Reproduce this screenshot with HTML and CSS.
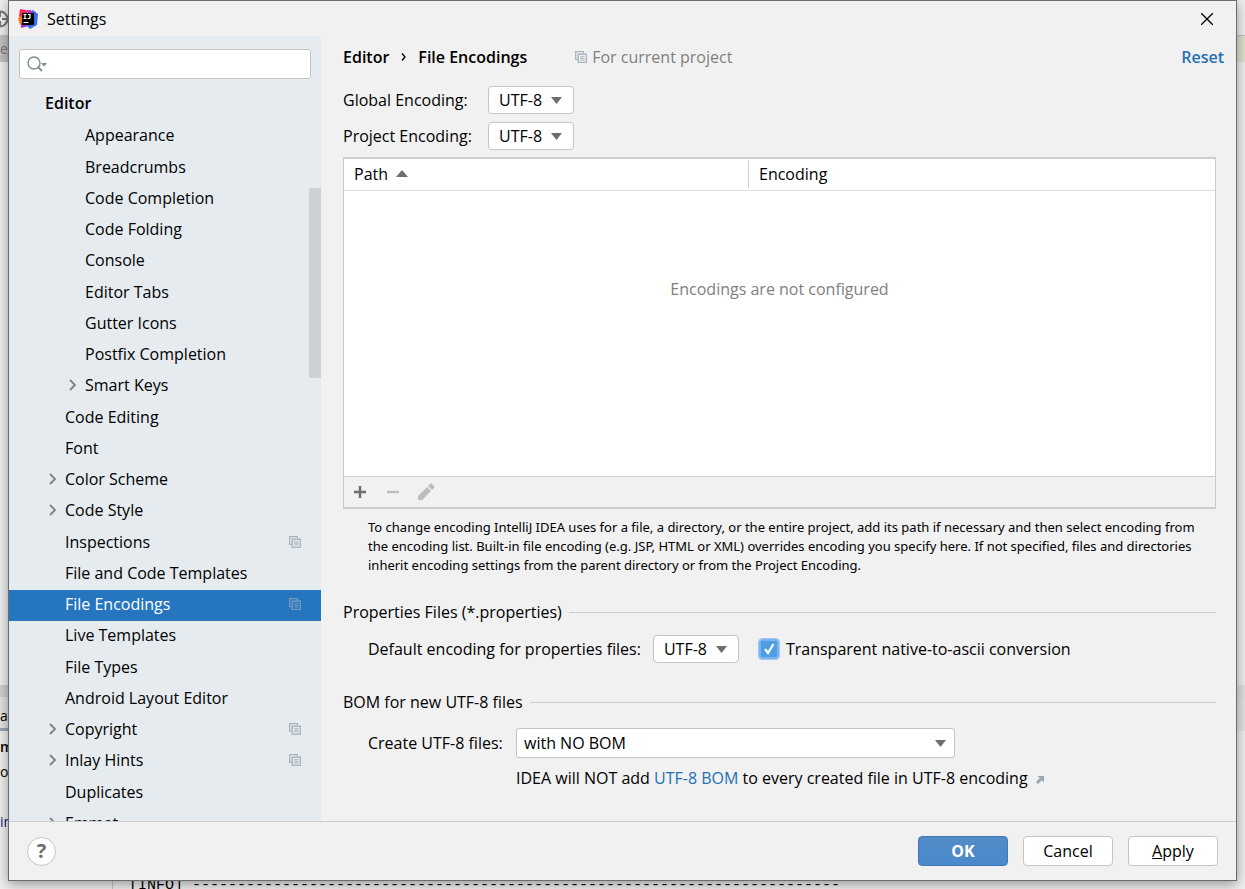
FILE: index.html
```html
<!DOCTYPE html>
<html lang="en">
<head>
  <meta charset="UTF-8">
  <title>Settings</title>
  <link rel="stylesheet" href="styles.css">
</head>
<body>
  <!-- shared icons -->
  <svg class="sprite" aria-hidden="true">
    <symbol id="copy" viewBox="0 0 12 12">
      <path d="M0 0h9v2.500H7.700V1.300H1.300v6.400h1.200V9H0z" fill="#a9b5bf"/>
      <path d="M2.500 2.500H12V12H2.500zM4 4v6.700h6.700V4z" fill="#a9b5bf" fill-rule="evenodd"/>
      <path d="M5.200 5.700h4.300M5.200 7.300h4.300M5.200 9h4.300" stroke="#a9b5bf" stroke-width="1"/>
    </symbol>
    <symbol id="arrow" viewBox="0 0 8 12">
      <path d="M1 1l5 5-5 5" fill="none" stroke="#808080" stroke-width="1.800"/>
    </symbol>
  </svg>

  <!-- IDE behind the dialog -->
  <div class="ide">
    <div class="ide-toolbar">
      <svg width="18" height="18" viewBox="0 0 18 18"><circle cx="9" cy="9" r="7.500" fill="none" stroke="#777" stroke-width="2"/><path d="M9 2v5M9 11v5M11 9h5M2 9h5" stroke="#777" stroke-width="2"/></svg>
    </div>
    <div class="ide-tabs">e_</div>
    <div class="ide-editor"></div>
    <div class="ide-bar"></div>
    <div class="ide-run"><span>av</span></div>
    <div class="ide-console">
      <div class="ide-tree"><b>m</b><span>or</span><span></span><span class="blue">in</span></div>
      <pre class="ide-log">[INFO] ------------------------------------------------------------------------</pre>
    </div>
  </div>

  <div class="dialog">
    <header class="titlebar">
      <svg width="20" height="20" viewBox="0 0 20 20">
        <path d="M2 0l6 1 3 3-4 9-5 1 1-4-2-3z" fill="#fe2857"/>
        <path d="M0 9l4-2 2 7-4 2z" fill="#f97a12"/>
        <path d="M3 14l6-2 2 5-8 2z" fill="#a334d8"/>
        <path d="M12 3l3-2 5 4-1 11-7 4-4-4z" fill="#3a6cf0"/>
        <path d="M9 1l4 0 1 3-4 2z" fill="#c032c8"/>
        <path d="M4 4h12v12H4z"/>
        <path d="M5.500 5.500h3M7 5.500v4M5.500 9.500h3M10 5.500h2v3q0 1-1 1h-1.500M5.500 13.500h5" fill="none" stroke="#fff" stroke-width="1.200"/>
      </svg>
      <span>Settings</span>
      <button class="close" aria-label="Close">
        <svg width="12" height="12" viewBox="0 0 12 12"><path d="M0 0l12 12M12 0L0 12" stroke="#000" stroke-width="1.300"/></svg>
      </button>
    </header>

    <div class="main">
      <aside class="sidebar">
        <div class="search">
          <svg width="22" height="16" viewBox="0 0 22 16"><circle cx="7" cy="7" r="6" fill="none" stroke="#7f8b91" stroke-width="1.400"/><path d="M11 11l4 4" stroke="#7f8b91" stroke-width="1.800"/><path d="M14 7h6l-3 3.500z" fill="#7f8b91"/></svg>
          <input type="text" aria-label="Search settings">
        </div>
        <ul class="tree">
          <li class="root">Editor</li>
          <li class="deep">Appearance</li>
          <li class="deep">Breadcrumbs</li>
          <li class="deep">Code Completion</li>
          <li class="deep">Code Folding</li>
          <li class="deep">Console</li>
          <li class="deep">Editor Tabs</li>
          <li class="deep">Gutter Icons</li>
          <li class="deep">Postfix Completion</li>
          <li class="deep"><svg class="arrow"><use href="#arrow"/></svg>Smart Keys</li>
          <li>Code Editing</li>
          <li>Font</li>
          <li><svg class="arrow"><use href="#arrow"/></svg>Color Scheme</li>
          <li><svg class="arrow"><use href="#arrow"/></svg>Code Style</li>
          <li>Inspections<svg class="copy"><use href="#copy"/></svg></li>
          <li>File and Code Templates</li>
          <li class="selected">File Encodings<svg class="copy"><use href="#copy"/></svg></li>
          <li>Live Templates</li>
          <li>File Types</li>
          <li>Android Layout Editor</li>
          <li><svg class="arrow"><use href="#arrow"/></svg>Copyright<svg class="copy"><use href="#copy"/></svg></li>
          <li><svg class="arrow"><use href="#arrow"/></svg>Inlay Hints<svg class="copy"><use href="#copy"/></svg></li>
          <li>Duplicates</li>
          <li><svg class="arrow"><use href="#arrow"/></svg>Emmet</li>
        </ul>
        <div class="thumb"></div>
      </aside>

      <section class="content">
        <div class="crumbs">
          <b>Editor</b>
          <svg width="5" height="8" viewBox="0 0 5 8"><path d="M1 0.500L4 4 1 7.500" fill="none" stroke="#000" stroke-width="1.400"/></svg>
          <b>File Encodings</b>
          <span class="scope"><svg class="copy"><use href="#copy"/></svg>For current project</span>
          <a href="#" class="reset">Reset</a>
        </div>

        <div class="encodings">
          <label for="global">Global Encoding:</label>
          <select id="global" class="combo"><option>UTF-8</option></select>
          <label for="project">Project Encoding:</label>
          <select id="project" class="combo"><option>UTF-8</option></select>
        </div>

        <div class="panel">
          <table>
            <thead>
              <tr>
                <th class="path">Path <svg width="12" height="7" viewBox="0 0 12 7"><path d="M6 0l6 7H0z" fill="#6e6e6e"/></svg></th>
                <th><span>Encoding</span></th>
              </tr>
            </thead>
            <tbody>
              <tr><td colspan="2">Encodings are not configured</td></tr>
            </tbody>
          </table>
          <div class="tools">
            <button aria-label="Add"><svg width="18" height="18" viewBox="0 0 18 18"><path d="M9 3v12M3 9h12" stroke="#6e6e6e" stroke-width="2.400"/></svg></button>
            <button aria-label="Remove" disabled><svg width="18" height="18" viewBox="0 0 18 18"><path d="M3 9h12" stroke="#bdbdbd" stroke-width="2.400"/></svg></button>
            <button aria-label="Edit" disabled><svg width="18" height="18" viewBox="0 0 18 18"><path d="M1 17v-4l9-9 4 4-9 9zM11 3l2-2q1-1 2 0l2 2q1 1 0 2l-2 2z" fill="#bdbdbd"/></svg></button>
          </div>
        </div>

        <p class="hint">To change encoding IntelliJ IDEA uses for a file, a directory, or the entire project, add its path if necessary and then select encoding from the encoding list. Built-in file encoding (e.g. JSP, HTML or XML) overrides encoding you specify here. If not specified, files and directories inherit encoding settings from the parent directory or from the Project Encoding.</p>

        <h2>Properties Files (*.properties)</h2>
        <div class="row props">
          <label for="props">Default encoding for properties files:</label>
          <select id="props" class="combo"><option>UTF-8</option></select>
          <input type="checkbox" id="ascii" checked>
          <label for="ascii">Transparent native-to-ascii conversion</label>
        </div>

        <h2>BOM for new UTF-8 files</h2>
        <div class="row bom">
          <label for="bom">Create UTF-8 files:</label>
          <select id="bom" class="combo wide"><option>with NO BOM</option></select>
          <p class="note">IDEA will NOT add <a href="#">UTF-8 BOM</a> to every created file in UTF-8 encoding
            <svg width="8" height="8" viewBox="0 0 8 8"><path d="M1.500 0H8v6.500L5.800 4.300 2 8 0 6l3.700-3.800z" fill="#9aa7b0"/></svg></p>
        </div>
      </section>
    </div>

    <footer class="footer">
      <button class="help" aria-label="Help">?</button>
      <button class="btn primary">OK</button>
      <button class="btn">Cancel</button>
      <button class="btn"><u>A</u>pply</button>
    </footer>
  </div>
</body>
</html>
```

FILE: styles.css
```css
* {
  box-sizing: border-box;
}

body {
  margin: 0;
  height: 100vh;
  overflow: hidden;
  background: #f0f0f0;
  color: #000;
  font: 16px/20px "Open Sans", "Noto Sans", sans-serif;
}

button, input, select {
  font: inherit;
  color: inherit;
}

b {
  font-weight: 600;
}

a {
  color: #2470b3;
  text-decoration: none;
}

.sprite {
  display: none;
}

/* IDE in the background */
.ide {
  height: 100%;
  display: flex;
  flex-direction: column;
  font-size: 14px;
  white-space: nowrap;
}

.ide-toolbar {
  height: 36px;
  padding-top: 10px;
  border-bottom: 1px solid #c4c4c4;
}

.ide-toolbar svg {
  display: block;
  margin-left: -9px;
}

.ide-tabs {
  height: 26px;
  padding-top: 3px;
  background: linear-gradient(90deg, #c2c2c2 50%, #e2e2cf 50%);
  color: #777;
}

.ide-editor {
  flex: 1;
}

.ide-bar {
  height: 12px;
  background: linear-gradient(90deg, #d0d0d0 50%, #e0e0e0 50%);
}

.ide-run {
  height: 34px;
  background: #e4e4e4;
}

.ide-run span {
  display: block;
  width: 50%;
  height: 34px;
  padding-top: 9px;
  border-bottom: 3px solid #9aa3b3;
}

.ide-console {
  height: 158px;
  display: flex;
}

.ide-tree {
  width: 113px;
  padding-top: 3px;
  border-right: 1px solid #c4c4c4;
  line-height: 25px;
}

.ide-tree b, .ide-tree span {
  display: block;
  height: 25px;
}

.ide-tree .blue {
  color: #00287a;
}

.ide-log {
  align-self: flex-end;
  margin: 0 0 0 16px;
  font: 15px/6px "Liberation Mono", monospace;
}

/* dialog */
.dialog {
  position: absolute;
  inset: 0 8px 8px;
  display: flex;
  flex-direction: column;
  border: 1px solid #6b6b6b;
  background: #f1f1f1;
  box-shadow: 0 3px 12px rgba(0, 0, 0, 0.4);
}

.titlebar {
  height: 35px;
  padding: 0 23px 0 9px;
  display: flex;
  align-items: center;
  gap: 9px;
}

.close {
  margin-left: auto;
  padding: 0;
  border: none;
  background: none;
  display: flex;
}

.main {
  flex: 1;
  min-height: 0;
  display: flex;
}

.sidebar {
  position: relative;
  width: 312px;
  padding-top: 13px;
  background: #e5ebef;
  overflow: hidden;
}

.search {
  height: 30px;
  margin: 0 10px;
  padding-left: 7px;
  display: flex;
  align-items: center;
  background: #fff;
  border: 1px solid #c4c4c4;
  border-radius: 3px;
}

.search input {
  flex: 1;
  border: none;
  outline: none;
  background: none;
}

.tree {
  list-style: none;
  margin: 10px 0 0;
  padding: 0;
}

.tree li {
  display: flex;
  align-items: center;
  height: 31px;
  padding: 0 20px 3px 56px;
}

.tree li:nth-child(4n+3) {
  margin-top: 1px;
}

.tree .root {
  padding-left: 36px;
  margin-bottom: 1px;
  font-weight: 600;
}

.tree .deep {
  padding-left: 76px;
}

.tree .selected {
  background: #2675bf;
  color: #fff;
}

.selected .copy {
  opacity: 0.6;
}

.arrow {
  width: 8px;
  height: 12px;
  margin: 0 8px 0 -16px;
}

.copy {
  width: 12px;
  height: 12px;
}

.tree .copy {
  margin-left: auto;
}

.thumb {
  position: absolute;
  top: 152px;
  right: 0;
  width: 12px;
  height: 190px;
  background: #cdd1d5;
}

.content {
  flex: 1;
  padding: 11px 20px 0 22px;
}

.crumbs {
  display: flex;
  align-items: center;
  margin-right: -8px;
}

.crumbs svg {
  margin: 0 12px;
}

.scope {
  margin-left: 48px;
  color: #808080;
}

.scope .copy {
  margin: 0 5px 0 0;
}

.reset {
  margin-left: auto;
  font-weight: 600;
}

.encodings {
  display: grid;
  grid-template-columns: 145px max-content;
  align-items: center;
  gap: 8px 0;
  margin-top: 19px;
}

.combo {
  appearance: none;
  width: 86px;
  height: 28px;
  padding: 0 10px;
  border: 1px solid #c4c4c4;
  border-radius: 4px;
  background: #fff url("data:image/svg+xml,%3Csvg xmlns='http://www.w3.org/2000/svg' width='11' height='7'%3E%3Cpath d='M0 0h11L5.500 7z' fill='%236e6e6e'/%3E%3C/svg%3E") no-repeat right 11px center;
}

.combo.wide {
  width: 439px;
  height: 30px;
  padding: 0 7px;
  border-radius: 3px;
  background-position: right 8px center;
}

.panel {
  margin-top: 7px;
  border: 1px solid #cdcdcd;
  border-width: 2px 1px;
}

table {
  width: 100%;
  border-collapse: collapse;
  background: #fff;
}

th {
  height: 31px;
  padding: 0;
  border-bottom: 1px solid #e0e0e0;
  font-weight: normal;
  text-align: left;
}

th.path {
  width: 404px;
  padding-left: 10px;
}

th svg {
  margin: 0 0 3px 4px;
}

th span {
  display: block;
  padding: 4px 10px;
  border-left: 1px solid #d0d0d0;
}

td {
  height: 286px;
  padding: 0 0 88px;
  color: #808080;
  text-align: center;
}

.tools {
  height: 31px;
  padding-left: 7px;
  display: flex;
  align-items: center;
  gap: 15px;
  border-top: 1px solid #cdcdcd;
}

.tools button {
  display: flex;
  padding: 0;
  border: none;
  background: none;
}

.hint {
  margin: 9px 0 0 25px;
  font-family: "Noto Sans", sans-serif;
  font-size: 13px;
  line-height: 19px;
}

h2 {
  display: flex;
  align-items: center;
  gap: 7px;
  margin: 27px 0 0;
  font-size: 16px;
  font-weight: normal;
}

h2::after {
  content: "";
  flex: 1;
  border-top: 1px solid #cdcdcd;
}

.row {
  padding-left: 25px;
}

.props {
  display: flex;
  align-items: center;
  margin-top: 13px;
}

.props .combo {
  margin: 0 20px 0 12px;
}

input[type="checkbox"] {
  appearance: none;
  width: 20px;
  height: 20px;
  margin: 0 7px 0 0;
  border: 2px solid #7db4ef;
  border-radius: 3px;
  outline: 1px solid #9cc6f3;
  background: #4f9ee3 url("data:image/svg+xml,%3Csvg xmlns='http://www.w3.org/2000/svg' width='12' height='12'%3E%3Cpath d='M2 6l3 4 5.500-9' fill='none' stroke='white' stroke-width='2.200'/%3E%3C/svg%3E") no-repeat center;
}

.props + h2 {
  margin-top: 29px;
}

.bom {
  display: grid;
  grid-template-columns: 148px 1fr;
  align-items: center;
  margin-top: 16px;
}

.note {
  grid-column: 2;
  margin: 10px 0 0;
}

.note svg {
  margin-left: 4px;
}

.footer {
  height: 59px;
  padding: 0 18px;
  display: flex;
  align-items: center;
  gap: 15px;
  border-top: 1px solid #cdcdcd;
}

.help {
  width: 29px;
  height: 29px;
  margin-right: auto;
  padding: 0;
  border: 1px solid #c4c4c4;
  border-radius: 50%;
  background: #fff;
  color: #6e6e6e;
  font-size: 20px;
  font-weight: bold;
}

.btn {
  width: 90px;
  height: 30px;
  padding: 0;
  border: 1px solid #c4c4c4;
  border-radius: 4px;
  background: #fff;
}

.primary {
  border-color: #3f78b8;
  background: linear-gradient(#528cc7, #4989cc);
  color: #fff;
  font-weight: bold;
}
```
